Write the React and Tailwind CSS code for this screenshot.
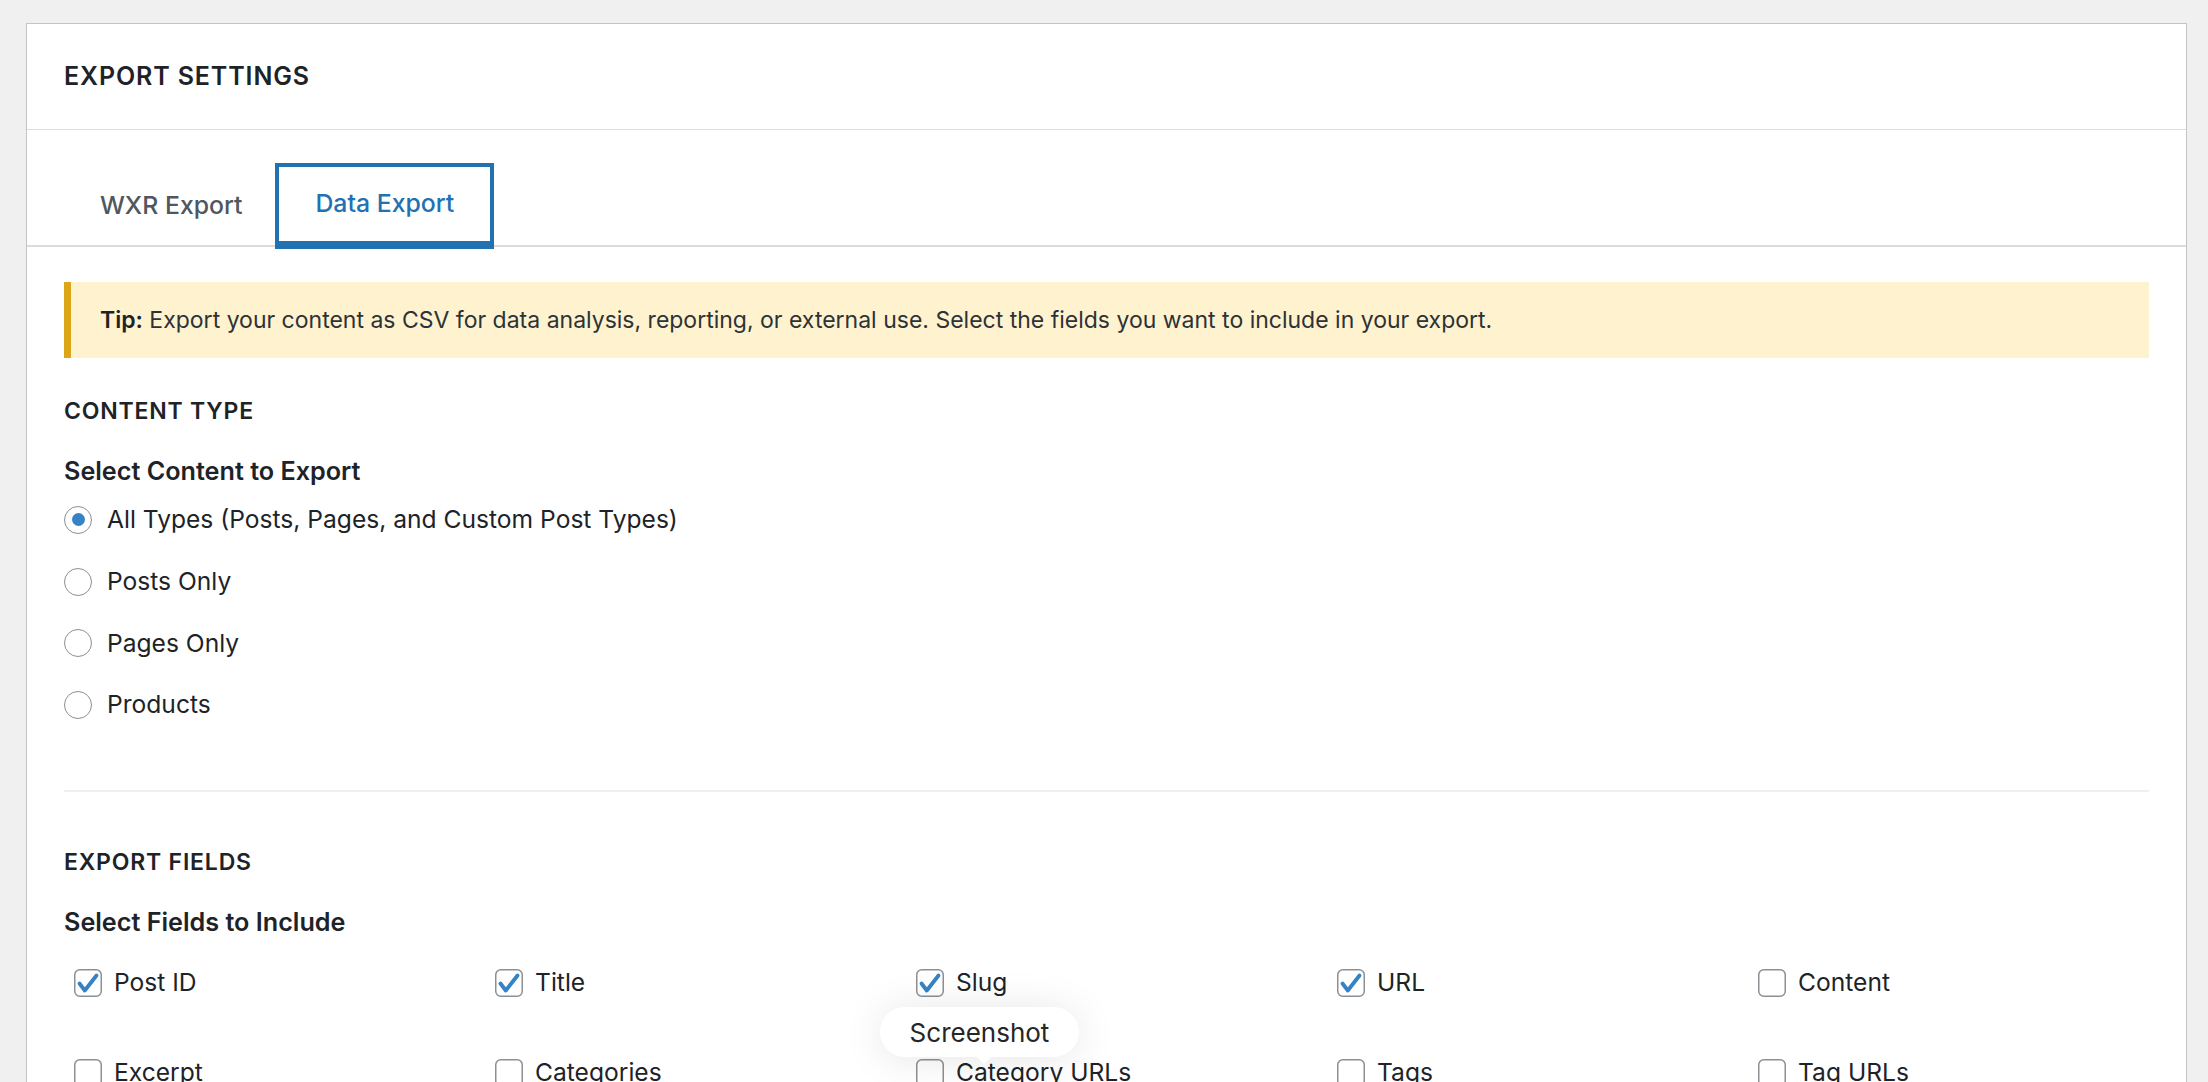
import React from "react";

const FONT = { fontFamily: "Inter, 'Noto Sans', 'Liberation Sans', sans-serif" };

const contentTypes = [
  { label: "All Types (Posts, Pages, and Custom Post Types)", checked: true },
  { label: "Posts Only", checked: false },
  { label: "Pages Only", checked: false },
  { label: "Products", checked: false },
];

const fields = [
  { label: "Post ID", checked: true },
  { label: "Title", checked: true },
  { label: "Slug", checked: true },
  { label: "URL", checked: true },
  { label: "Content", checked: false },
  { label: "Excerpt", checked: false },
  { label: "Categories", checked: false },
  { label: "Category URLs", checked: false },
  { label: "Tags", checked: false },
  { label: "Tag URLs", checked: false },
];

function Radio({ checked }) {
  return (
    <span className="flex h-[28px] w-[28px] shrink-0 items-center justify-center rounded-full border-[1.5px] border-[#8c8f94] bg-white">
      {checked && <span className="h-[13px] w-[13px] rounded-full bg-[#3582c4]" />}
    </span>
  );
}

function Checkbox({ checked }) {
  return (
    <svg width="28" height="28" viewBox="0 0 28 28" className="shrink-0">
      <rect x="0.75" y="0.75" width="26.5" height="26.5" rx="5" fill="#fff" stroke="#8c8f94" strokeWidth="1.5" />
      {checked && (
        <path d="M5.5 14.5 L10.8 21.5 L22.5 6.5" fill="none" stroke="#3582c4" strokeWidth="3.8" strokeLinecap="round" strokeLinejoin="round" />
      )}
    </svg>
  );
}

function SectionHeading({ children, className }) {
  return (
    <h3 className={"text-[23px] leading-[32px] font-semibold uppercase tracking-[0.035em] text-[#1d2327] " + className}>
      {children}
    </h3>
  );
}

function SubHeading({ children, className }) {
  return <h4 className={"text-[25.2px] leading-[32px] font-semibold text-[#1d2327] " + className}>{children}</h4>;
}

export default function App() {
  return (
    <div className="relative min-h-screen bg-[#f0f0f0] pl-[26px] pr-[21px] pt-[23px] pb-[40px]" style={FONT}>
      <div className="border border-[#c3c4c7] bg-white">
        {/* Card header */}
        <div className="flex h-[106px] items-center border-b border-[#dcdcde] px-[37px]">
          <h2 className="text-[25px] font-semibold uppercase tracking-[0.035em] text-[#1d2327]">Export Settings</h2>
        </div>

        {/* Tabs */}
        <div className="flex items-end border-b-2 border-[#dcdcde] px-[37px] pt-[33px]">
          <button className="-mb-[4px] flex h-[86px] items-center pl-[36px] pr-[33px] text-[24.8px] font-medium text-[#50575e]">
            WXR Export
          </button>
          <button className="-mb-[4px] flex h-[86px] items-center border-[4px] border-b-[8px] border-[#2271b1] px-[36px] text-[24.8px] font-medium text-[#2271b1]">
            Data Export
          </button>
        </div>

        {/* Tab panel */}
        <div className="px-[37px] pt-[35px] pb-[200px]">
          <div className="flex h-[76px] items-center border-l-[7px] border-[#dba617] bg-[#fff2cf] pl-[29px] text-[23px] text-[#2c3338]">
            <p>
              <strong className="font-semibold text-[#1d2327]">Tip:</strong> Export your content as CSV for data analysis,
              reporting, or external use. Select the fields you want to include in your export.
            </p>
          </div>

          <SectionHeading className="mt-[37px]">Content Type</SectionHeading>
          <SubHeading className="mt-[28px]">Select Content to Export</SubHeading>

          <div className="mt-[2px] flex flex-col">
            {contentTypes.map((t) => (
              <label key={t.label} className="flex h-[61.7px] items-center gap-[15px] text-[24.6px] text-[#1d2327]">
                <Radio checked={t.checked} />
                <span>{t.label}</span>
              </label>
            ))}
          </div>

          <div className="mt-[54px] h-[2px] bg-[#f0f0f1]" />

          <SectionHeading className="mt-[54px]">Export Fields</SectionHeading>
          <SubHeading className="mt-[28px]">Select Fields to Include</SubHeading>

          <div className="mt-[25px] grid grid-cols-5 gap-x-[20px] gap-y-[50px]">
            {fields.map((f) => (
              <label key={f.label} className="flex h-[40px] items-center gap-[12px] pl-[10px] text-[24.6px] text-[#1d2327]">
                <Checkbox checked={f.checked} />
                <span>{f.label}</span>
              </label>
            ))}
          </div>
        </div>
      </div>

      {/* Capture hint bubble */}
      <div className="absolute left-[880px] top-[1007px] flex h-[50px] w-[199px] items-center justify-center rounded-[25px] bg-white text-[26px] text-[#262626] shadow-[0_2px_40px_rgba(0,0,0,0.10)]">
        Screenshot
        <span className="absolute left-[95px] top-[48px] h-0 w-0 border-x-[9px] border-t-[9px] border-x-transparent border-t-white" />
      </div>
    </div>
  );
}
